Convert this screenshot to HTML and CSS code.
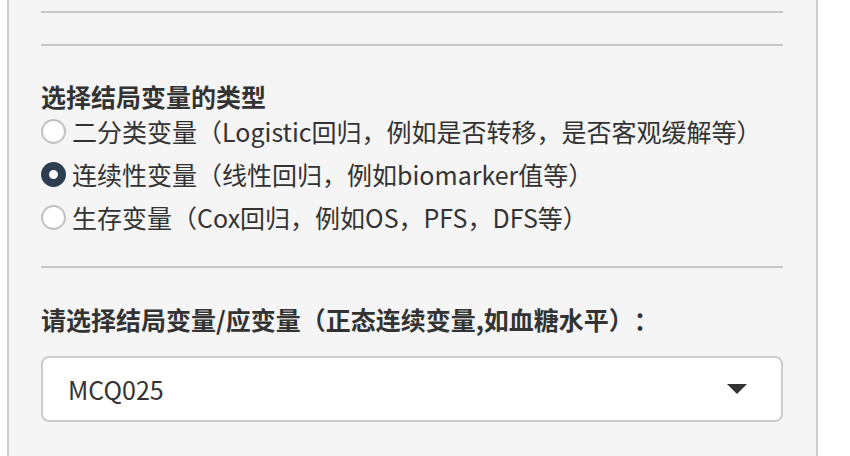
FILE: index.html
```html
<!DOCTYPE html>
<html lang="zh">
<head>
  <meta charset="UTF-8">
  <meta name="viewport" content="width=device-width, initial-scale=1.0">
  <title>结局变量</title>
  <link rel="stylesheet" href="styles.css">
</head>
<body>
  <div class="panel">
    <hr class="linea primera">
    <hr class="linea segunda">

    <div class="grupo">
      <label class="titulo">选择结局变量的类型</label>
      <div class="opciones">
        <label class="opcion"><span class="radio"></span>二分类变量（Logistic回归，例如是否转移，是否客观缓解等）</label>
        <label class="opcion"><span class="radio activo"></span>连续性变量（线性回归，例如biomarker值等）</label>
        <label class="opcion"><span class="radio"></span>生存变量（Cox回归，例如OS，PFS，DFS等）</label>
      </div>
    </div>

    <hr class="linea tercera">

    <div class="grupo">
      <label class="titulo">请选择结局变量/应变量（正态连续变量,如血糖水平）：</label>
      <div class="selector">
        <span class="valor">MCQ025</span>
        <span class="flecha"></span>
      </div>
    </div>
  </div>
</body>
</html>
```

FILE: styles.css
```css
body {
  margin: 0;
  background-color: #ffffff;
  font-family: "Noto Sans CJK SC", "Noto Sans", sans-serif;
  color: #333333;
  font-size: 25px;
  line-height: 35px;
  text-spacing-trim: space-all;
}
.panel {
  margin-left: 7px;
  width: 811px;
  height: 456px;
  box-sizing: border-box;
  background-color: #f5f5f5;
  border-left: 2px solid #cccccc;
  border-right: 2px solid #cccccc;
  padding: 0 33px 0 32px;
  overflow: hidden;
}
.linea {
  border: 0;
  border-top: 2px solid #c8c8c8;
  margin: 0;
}
.primera {
  margin-top: 11px;
}
.segunda {
  margin-top: 31px;
}
.tercera {
  margin-top: 31px;
}
.grupo {
  display: flex;
  flex-direction: column;
}
.segunda + .grupo {
  margin-top: 33px;
}
.tercera + .grupo {
  margin-top: 34px;
}
.titulo {
  font-weight: 700;
}
.opciones {
  display: flex;
  flex-direction: column;
  gap: 8px;
}
.opcion {
  display: flex;
  align-items: center;
  gap: 6px;
  white-space: nowrap;
}
.radio {
  width: 25px;
  height: 25px;
  box-sizing: border-box;
  border: 2px solid #c2c2c2;
  border-radius: 50%;
  background-color: #ffffff;
  flex-shrink: 0;
}
.radio.activo {
  border: 8px solid #2c3e50;
}
.selector {
  margin-top: 19px;
  height: 66px;
  box-sizing: border-box;
  border: 2px solid #cccccc;
  border-radius: 8px;
  background-color: #ffffff;
  display: flex;
  align-items: center;
  justify-content: space-between;
  padding: 0 34px 0 25px;
}
.flecha {
  width: 0;
  height: 0;
  border-left: 10px solid transparent;
  border-right: 10px solid transparent;
  border-top: 10px solid #333333;
}
```
